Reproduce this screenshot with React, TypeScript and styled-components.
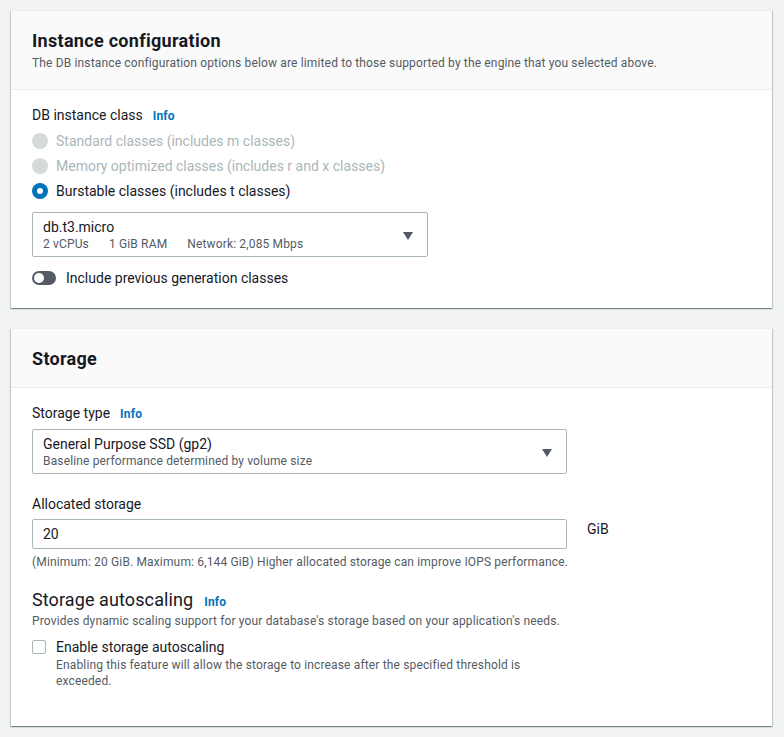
import React from "react";
import styled, { createGlobalStyle } from "styled-components";

const Global = createGlobalStyle`
  html, body { margin: 0; padding: 0; background: #f2f3f3; }
  body { font-family: Roboto, "Noto Sans", sans-serif; color: #16191f; -webkit-font-smoothing: antialiased; }
  * { box-sizing: border-box; }
`;

const Page = styled.div`
  display: flex;
  flex-direction: column;
  gap: 20px;
  padding: 10px 12px 10px 11px;
`;

const Card = styled.section`
  background: #fff;
  border-top: 1px solid #eaeded;
  box-shadow: 0 1px 1px 0 rgba(0, 28, 36, 0.3), 1px 1px 1px 0 rgba(0, 28, 36, 0.15),
    -1px 1px 1px 0 rgba(0, 28, 36, 0.15);
`;

const Header = styled.header<{ $bottom?: number }>`
  background: #fafafa;
  border-bottom: 1px solid #eaeded;
  padding: 19px 20px ${(p) => p.$bottom ?? 18}px 21px;
`;

const Title = styled.h2`
  margin: 0;
  font-size: 18px;
  line-height: 22px;
  font-weight: 700;
  letter-spacing: 0.3px;
  color: #16191f;
`;

const HeaderDesc = styled.p`
  margin: 3px 0 0;
  font-size: 12px;
  line-height: 16px;
  letter-spacing: 0.15px;
  color: #545b64;
`;

const Body = styled.div<{ $bottom?: number }>`
  padding: 15px 20px ${(p) => p.$bottom ?? 20}px 21px;
  display: flex;
  flex-direction: column;
`;

const Label = styled.div`
  display: flex;
  align-items: baseline;
  gap: 10px;
  font-size: 14px;
  line-height: 20px;
  color: #16191f;
`;

const Info = styled.a`
  font-size: 12px;
  font-weight: 700;
  letter-spacing: 0.2px;
  color: #0073bb;
  text-decoration: none;
`;

const RadioGroup = styled.div`
  display: flex;
  flex-direction: column;
  margin-top: 2px;
`;

const RadioRow = styled.label<{ $disabled?: boolean }>`
  display: flex;
  align-items: center;
  gap: 8px;
  height: 25px;
  font-size: 14px;
  color: ${(p) => (p.$disabled ? "#aab7b8" : "#16191f")};
`;

const RadioDot = styled.span<{ $checked?: boolean; $disabled?: boolean }>`
  width: 16px;
  height: 16px;
  border-radius: 50%;
  flex: none;
  background: ${(p) => (p.$disabled ? "#d5dbdb" : p.$checked ? "#0073bb" : "#fff")};
  position: relative;
  &::after {
    content: "";
    display: ${(p) => (p.$checked ? "block" : "none")};
    position: absolute;
    left: 5px;
    top: 5px;
    width: 6px;
    height: 6px;
    border-radius: 50%;
    background: #fff;
  }
`;

const Select = styled.div<{ $width: number }>`
  width: ${(p) => p.$width}px;
  border: 1px solid #aab7b8;
  border-radius: 2px;
  padding: 5px 14px 4px 10px;
  display: flex;
  align-items: center;
  justify-content: space-between;
  background: #fff;
`;

const SelectText = styled.div`
  display: flex;
  flex-direction: column;
`;

const SelectMain = styled.div`
  font-size: 14px;
  line-height: 18px;
  color: #16191f;
`;

const SelectSub = styled.div`
  display: flex;
  gap: 20px;
  font-size: 12px;
  line-height: 16px;
  letter-spacing: 0.15px;
  color: #545b64;
`;

const Caret = styled.span`
  width: 0;
  height: 0;
  border-left: 5px solid transparent;
  border-right: 5px solid transparent;
  border-top: 8px solid #545b64;
  margin-top: 2px;
`;

const ToggleRow = styled.label`
  display: flex;
  align-items: center;
  gap: 10px;
  font-size: 14px;
  line-height: 20px;
  margin-top: 11px;
`;

const Toggle = styled.span`
  width: 24px;
  height: 14px;
  border-radius: 7px;
  background: #545b64;
  position: relative;
  flex: none;
  &::after {
    content: "";
    position: absolute;
    left: 2px;
    top: 2px;
    width: 10px;
    height: 10px;
    border-radius: 50%;
    background: #fff;
  }
`;

const Field = styled.div<{ $top?: number }>`
  display: flex;
  flex-direction: column;
  margin-top: ${(p) => p.$top ?? 0}px;
`;

const InputRow = styled.div`
  display: flex;
  align-items: flex-start;
  gap: 20px;
  margin-top: 5px;
`;

const Input = styled.div`
  width: 535px;
  height: 30px;
  border: 1px solid #aab7b8;
  border-radius: 2px;
  padding: 0 10px;
  display: flex;
  align-items: center;
  font-size: 14px;
  color: #16191f;
`;

const Unit = styled.span`
  font-size: 14px;
  line-height: 20px;
  color: #16191f;
`;

const Hint = styled.div`
  font-size: 12px;
  line-height: 16px;
  letter-spacing: 0.15px;
  color: #545b64;
  margin-top: 5px;
`;

const SubTitleRow = styled.div`
  display: flex;
  align-items: baseline;
  gap: 11px;
  margin-top: 19px;
`;

const SubTitle = styled.h3`
  margin: 0;
  font-size: 18px;
  line-height: 22px;
  font-weight: 400;
  letter-spacing: 0.1px;
  color: #16191f;
`;

const Desc = styled.div<{ $top?: number }>`
  font-size: 12px;
  line-height: 16px;
  letter-spacing: 0.15px;
  color: #545b64;
  margin-top: ${(p) => p.$top ?? 0}px;
`;

const CheckRow = styled.div`
  display: flex;
  gap: 10px;
  margin-top: 8px;
`;

const Box = styled.span`
  width: 14px;
  height: 14px;
  border: 1px solid #aab7b8;
  border-radius: 2px;
  background: #fff;
  flex: none;
  margin-top: 3px;
`;

const CheckText = styled.div`
  display: flex;
  flex-direction: column;
  width: 500px;
`;

const CheckLabel = styled.div`
  font-size: 14px;
  line-height: 20px;
  color: #16191f;
`;

export default function App() {
  return (
    <>
      <Global />
      <Page>
        <Card>
          <Header>
            <Title>Instance configuration</Title>
            <HeaderDesc>
              The DB instance configuration options below are limited to those supported by the engine that you selected above.
            </HeaderDesc>
          </Header>
          <Body>
            <Label>
              DB instance class <Info>Info</Info>
            </Label>
            <RadioGroup>
              <RadioRow $disabled>
                <RadioDot $disabled />
                Standard classes (includes m classes)
              </RadioRow>
              <RadioRow $disabled>
                <RadioDot $disabled />
                Memory optimized classes (includes r and x classes)
              </RadioRow>
              <RadioRow>
                <RadioDot $checked />
                Burstable classes (includes t classes)
              </RadioRow>
            </RadioGroup>
            <Field $top={9}>
              <Select $width={396}>
                <SelectText>
                  <SelectMain>db.t3.micro</SelectMain>
                  <SelectSub>
                    <span>2 vCPUs</span>
                    <span>1 GiB RAM</span>
                    <span>Network: 2,085 Mbps</span>
                  </SelectSub>
                </SelectText>
                <Caret />
              </Select>
            </Field>
            <ToggleRow>
              <Toggle />
              Include previous generation classes
            </ToggleRow>
          </Body>
        </Card>
        <Card>
          <Header $bottom={17}>
            <Title>Storage</Title>
          </Header>
          <Body $bottom={37}>
            <Label>
              Storage type <Info>Info</Info>
            </Label>
            <Field $top={5}>
              <Select $width={535}>
                <SelectText>
                  <SelectMain>General Purpose SSD (gp2)</SelectMain>
                  <SelectSub>Baseline performance determined by volume size</SelectSub>
                </SelectText>
                <Caret />
              </Select>
            </Field>
            <Field $top={20}>
              <Label>Allocated storage</Label>
              <InputRow>
                <Input>20</Input>
                <Unit>GiB</Unit>
              </InputRow>
              <Hint>(Minimum: 20 GiB. Maximum: 6,144 GiB) Higher allocated storage can improve IOPS performance.</Hint>
            </Field>
            <SubTitleRow>
              <SubTitle>Storage autoscaling</SubTitle>
              <Info>Info</Info>
            </SubTitleRow>
            <Desc $top={2}>Provides dynamic scaling support for your database's storage based on your application's needs.</Desc>
            <CheckRow>
              <Box />
              <CheckText>
                <CheckLabel>Enable storage autoscaling</CheckLabel>
                <Desc>Enabling this feature will allow the storage to increase after the specified threshold is exceeded.</Desc>
              </CheckText>
            </CheckRow>
          </Body>
        </Card>
      </Page>
    </>
  );
}
